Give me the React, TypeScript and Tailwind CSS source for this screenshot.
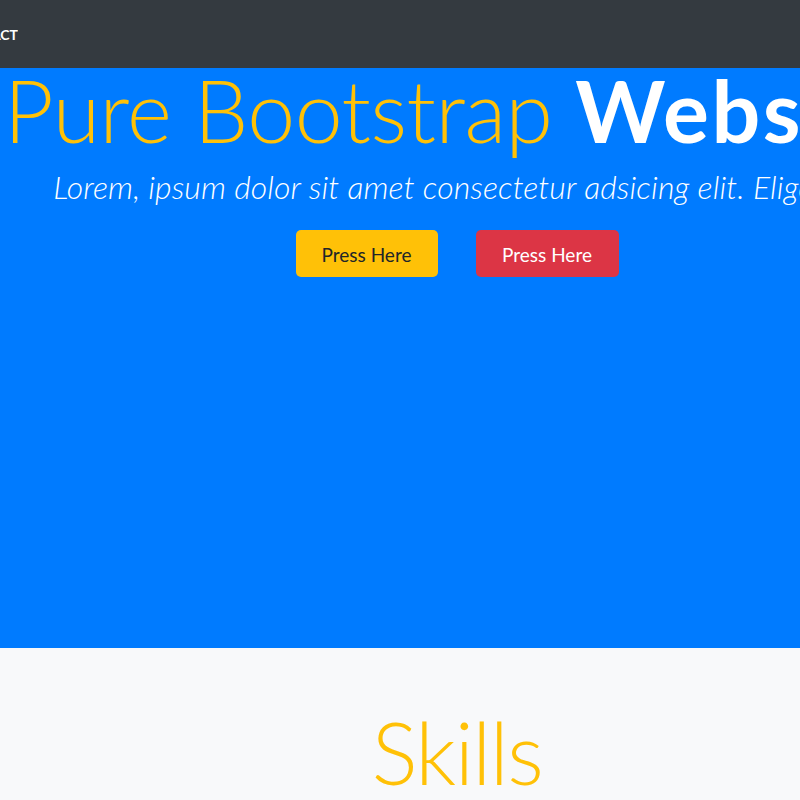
export default function App() {
  return (
    <div className="min-h-screen overflow-hidden bg-[#f8f9fa] font-['Lato',sans-serif]">
      {/* navbar, scrolled so only the end of the last link shows */}
      <nav className="h-[68px] bg-[#343a40] flex items-center">
        <div className="w-[18px] overflow-hidden flex justify-end">
          <a className="shrink-0 whitespace-nowrap text-[14px] font-bold text-white uppercase">
            Contact
          </a>
        </div>
      </nav>

      {/* hero */}
      <header className="h-[580px] bg-[#007bff]">
        <div className="w-[914px] text-center">
          <h1 className="text-[86px] leading-[84px] font-light text-[#ffc107] whitespace-nowrap">
            <span className="tracking-[-0.5px]">Pure Bootstrap </span>
            <span className="font-bold text-white tracking-[2.5px]">Website</span>
          </h1>
          <p className="mt-[16px] text-[32px] leading-[38px] font-light italic tracking-[0.1px] text-white whitespace-nowrap">
            Lorem, ipsum dolor sit amet consectetur adsicing elit. Eligendi.
          </p>
          <div className="mt-[24px] flex justify-center gap-[38px]">
            <button className="w-[142px] h-[47px] pt-[3px] rounded-[5px] bg-[#ffc107] text-[19px] text-[#212529]">
              Press Here
            </button>
            <button className="w-[143px] h-[47px] pt-[3px] rounded-[5px] bg-[#dc3545] text-[19px] text-white">
              Press Here
            </button>
          </div>
        </div>
      </header>

      {/* skills */}
      <section className="w-[914px] text-center pt-[48px]">
        <h2 className="text-[86px] leading-[112px] font-light tracking-[-1.5px] text-[#ffc107]">Skills</h2>
      </section>
    </div>
  );
}
